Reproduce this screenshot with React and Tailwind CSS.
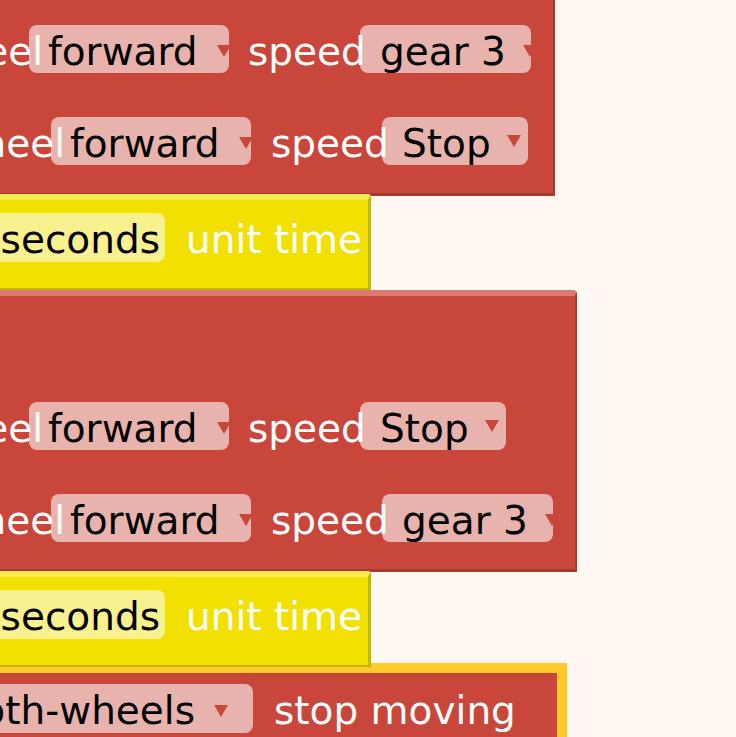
import React from 'react';

// blockly-ish canvas crop: blocks run off the left edge, so the column starts at -300px
const Arrow = ({ left, top }) => (
  <span
    className="absolute w-0 h-0 border-l-[7px] border-r-[7px] border-t-[12px] border-l-transparent border-r-transparent border-t-[#c9463a]"
    style={{ left, top }}
  />
);

const Field = ({ text, width, className = '', arrow, pad = 19 }) => (
  <div
    className={`relative h-[48px] shrink-0 rounded-[8px] bg-[#e8b3ad] text-black flex items-center pt-[4px] whitespace-nowrap ${className}`}
    style={{ width, paddingLeft: pad }}
  >
    {text}
    {arrow && <Arrow left={arrow.left} top={arrow.top} />}
  </div>
);

const Label = ({ text, width, className = '' }) => (
  <span className={`relative z-10 shrink-0 pt-[4px] whitespace-nowrap text-white ${className}`} style={{ width }}>
    {text}
  </span>
);

const WheelRow = ({ first, speed, speedWidth, speedArrow, className = '' }) => (
  <div className={`flex items-center h-[48px] ${className}`}>
    {first ? (
      <>
        <Label text="left wheel" width={343} className="text-right" />
        <Field text="forward" width={200} className="-ml-[14px]" arrow={{ left: 188, top: 20 }} />
        <Label text="speed" width={122} className="ml-[19px]" />
        <Field text={speed} width={speedWidth} className="-ml-[10px]" arrow={speedArrow} pad={20} />
      </>
    ) : (
      <>
        <Label text="right wheel" width={365} className="text-right" />
        <Field text="forward" width={200} className="-ml-[14px]" arrow={{ left: 188, top: 20 }} />
        <Label text="speed" width={122} className="ml-[20px]" />
        <Field text={speed} width={speedWidth} className="-ml-[11px]" arrow={speedArrow} pad={20} />
      </>
    )}
  </div>
);

const WaitBlock = ({ className = '' }) => (
  <div
    className={`relative w-[671px] h-[96px] shrink-0 bg-[#f2e000] border-t-[6px] border-t-[#f8ec52] border-r-[3px] border-r-[#c4b600] border-b-[2px] border-b-[#c4b600] rounded-tr-[3px] ${className}`}
  >
    <div className="flex items-center h-[49px] mt-[13px]">
      <div className="w-[465px] h-[49px] rounded-[8px] bg-[#f9f190] text-black flex items-center justify-end pt-[4px] pr-[5px]">
        seconds
      </div>
      <span className="ml-[21px] pt-[4px] text-white whitespace-nowrap">unit time</span>
    </div>
  </div>
);

const App = () => {
  const gearArrow = { left: 163, top: 20 };
  const stopArrow = { left: 125, top: 18 };

  return (
    <div
      className="w-[736px] h-[737px] overflow-hidden bg-[#fff8f2] text-[39px] leading-none"
      style={{ fontFamily: '"DejaVu Sans", "Open Sans", sans-serif' }}
    >
      <div className="flex flex-col items-start -ml-[300px]">
        {/* motor block 1 */}
        <div className="w-[855px] h-[196px] shrink-0 bg-[#c9463a] border-r-[2px] border-b-[3px] border-[#a53a2f] pt-[25px]">
          <WheelRow first speed="gear 3" speedWidth={171} speedArrow={gearArrow} />
          <WheelRow speed="Stop" speedWidth={146} speedArrow={stopArrow} className="mt-[44px]" />
        </div>

        <WaitBlock className="-mt-[2px]" />

        {/* motor block 2 */}
        <div className="w-[877px] h-[282px] shrink-0 bg-[#c9463a] border-t-[6px] border-t-[#d97b72] border-r-[2px] border-r-[#a53a2f] border-b-[3px] border-b-[#a53a2f] rounded-tr-[4px]">
          <WheelRow first speed="Stop" speedWidth={146} speedArrow={stopArrow} className="mt-[106px]" />
          <WheelRow speed="gear 3" speedWidth={171} speedArrow={gearArrow} className="mt-[44px]" />
        </div>

        <WaitBlock className="-mt-[1px]" />

        {/* selected stop block */}
        <div className="w-[867px] h-[120px] shrink-0 -mt-[4px] bg-[#c9463a] border-t-[10px] border-r-[10px] border-[#ffca2c]">
          <div className="flex items-center h-[49px] mt-[11px]">
            <div className="relative w-[553px] h-[49px] rounded-[8px] bg-[#e8b3ad] text-black flex items-center justify-end pt-[4px] pr-[58px]">
              both-wheels
              <Arrow left={514} top={21} />
            </div>
            <span className="ml-[21px] pt-[4px] text-white whitespace-nowrap">stop moving</span>
          </div>
        </div>
      </div>
    </div>
  );
};

export default App;
